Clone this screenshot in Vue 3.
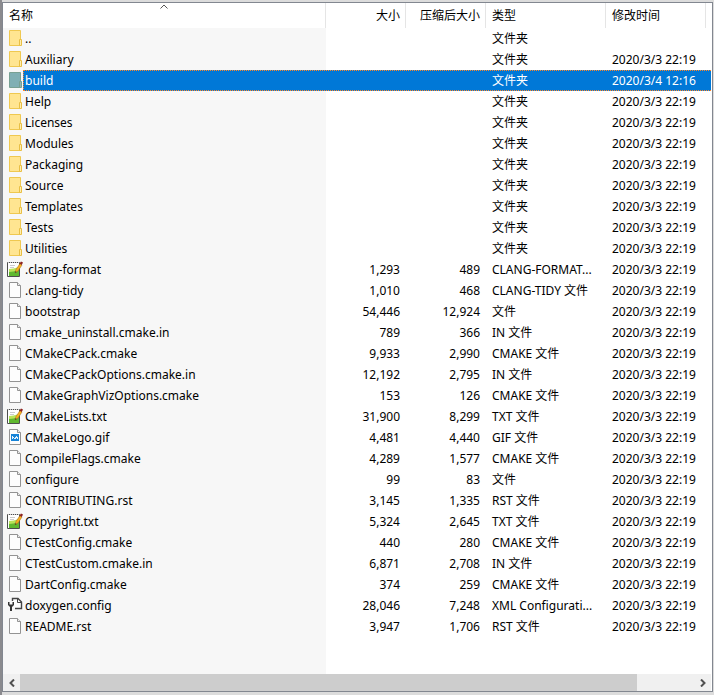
<template>
  <main class="window">
    <section class="panel">
      <div class="list">
        <table class="files">
          <colgroup>
            <col />
            <col class="col-size" />
            <col class="col-size" />
            <col class="col-type" />
            <col class="col-date" />
            <col class="col-rest" />
          </colgroup>
          <thead>
            <tr>
              <th v-for="col in columns" :key="col.key" :class="col.key">
                <button type="button" @click="sortKey = col.key">{{ col.label }}</button>
                <svg v-if="sortKey === col.key" class="sort" viewBox="0 0 8 5">
                  <path d="M0.5 4.5 L4 1 L7.5 4.5" fill="none" stroke="#555" />
                </svg>
              </th>
              <th></th>
            </tr>
          </thead>
          <tbody>
            <tr
              v-for="file in files"
              :key="file.name"
              :class="{ selected: file.name === selected }"
              @click="selected = file.name"
            >
              <td class="name">
                <div class="entry">
                  <svg v-if="file.icon === 'folder'" class="icon" viewBox="0 0 16 16">
                    <path class="folder-back" d="M2.5 0.5 H13.5 V15.5 H2.5 Z" />
                    <path class="folder-tab" d="M12.5 9.5 H14.5 V15.5 H12.5 Z" />
                  </svg>
                  <svg v-else-if="file.icon === 'note'" class="icon" viewBox="0 0 16 16">
                    <path d="M0.5 1.5 H12.5 V15.5 H0.5 Z" fill="#fff" stroke="#4d4d4d" />
                    <path d="M2 8 Q6 8 12 6 V15 H2 Z" fill="#b9e35a" />
                    <path d="M2 11 Q6 11 12 9 V15 H2 Z" fill="#5fb82f" />
                    <path d="M1 1.5 H12" stroke="#ccc" stroke-dasharray="1 1" />
                    <path d="M3 4.5 H8 M3 6.5 H7" stroke="#ccc" />
                    <path d="M8 12 L9 8.5 L13 2.5 L15 4 L11 10 Z" fill="#f9b01e" stroke="#9b6416" stroke-width="0.5" />
                    <path d="M12.5 2.5 L14 0.5 L16 1.5 L14.8 4 Z" fill="#8d2420" />
                    <path d="M8 12 L8.5 10.2 L9.8 11 Z" fill="#333" />
                  </svg>
                  <svg v-else-if="file.icon === 'config'" class="icon" viewBox="0 0 16 16">
                    <path d="M5.5 4 V1.5 H11 L14.5 5 V11.5 H8" fill="#fff" stroke="#444" stroke-width="1.4" />
                    <path d="M10.5 1.5 V5.5 H14.5" fill="none" stroke="#444" />
                    <path d="M1 5 V8 L3 10 V14 H5 V10 L7 8 V5 H5.5 V7.5 H2.5 V5 Z" fill="#333" />
                  </svg>
                  <svg v-else class="icon" viewBox="0 0 16 16">
                    <path d="M2.5 0.5 H10.5 L13.5 3.5 V15.5 H2.5 Z" fill="#fdfdfd" stroke="#939393" />
                    <path d="M10.5 0.5 V3.5 H13.5" fill="#eee" stroke="#939393" />
                    <template v-if="file.icon === 'image'">
                      <path d="M4 5 H12 V12 H4 Z" fill="#1683d8" />
                      <path d="M5 10 V7 H6 V8 H7 V9 H8 V8 H9 V7 H10 V8 H11 V10 H10 V9 H9 V10 H7 V9 H6 V10 Z" fill="#e4f2fc" />
                    </template>
                  </svg>
                  <span class="label">{{ file.name }}</span>
                </div>
              </td>
              <td class="size">{{ file.size }}</td>
              <td class="packed">{{ file.packed }}</td>
              <td class="type">{{ file.type }}</td>
              <td class="date">{{ file.date }}</td>
              <td></td>
            </tr>
          </tbody>
        </table>
      </div>
      <div class="scrollbar">
        <button type="button" aria-label="向左滚动">
          <svg viewBox="0 0 6 8"><path d="M5 0.5 L1.5 4 L5 7.5" /></svg>
        </button>
        <div class="track"><div class="thumb"></div></div>
        <button type="button" aria-label="向右滚动">
          <svg viewBox="0 0 6 8"><path d="M1 0.5 L4.5 4 L1 7.5" /></svg>
        </button>
      </div>
    </section>
  </main>
</template>

<script setup>
import { ref } from "vue"

const columns = [
  { key: "name", label: "名称" },
  { key: "size", label: "大小" },
  { key: "packed", label: "压缩后大小" },
  { key: "type", label: "类型" },
  { key: "date", label: "修改时间" }
]

const sortKey = ref("name")
const selected = ref("build")

const stamp = "2020/3/3 22:19"

function folder(name, date = stamp) {
  return { name, icon: "folder", type: "文件夹", date }
}

function item(name, size, packed, type, icon = "page") {
  return { name, size, packed, type, icon, date: stamp }
}

const files = [
  folder("..", ""),
  folder("Auxiliary"),
  folder("build", "2020/3/4 12:16"),
  folder("Help"),
  folder("Licenses"),
  folder("Modules"),
  folder("Packaging"),
  folder("Source"),
  folder("Templates"),
  folder("Tests"),
  folder("Utilities"),
  item(".clang-format", "1,293", "489", "CLANG-FORMAT...", "note"),
  item(".clang-tidy", "1,010", "468", "CLANG-TIDY 文件"),
  item("bootstrap", "54,446", "12,924", "文件"),
  item("cmake_uninstall.cmake.in", "789", "366", "IN 文件"),
  item("CMakeCPack.cmake", "9,933", "2,990", "CMAKE 文件"),
  item("CMakeCPackOptions.cmake.in", "12,192", "2,795", "IN 文件"),
  item("CMakeGraphVizOptions.cmake", "153", "126", "CMAKE 文件"),
  item("CMakeLists.txt", "31,900", "8,299", "TXT 文件", "note"),
  item("CMakeLogo.gif", "4,481", "4,440", "GIF 文件", "image"),
  item("CompileFlags.cmake", "4,289", "1,577", "CMAKE 文件"),
  item("configure", "99", "83", "文件"),
  item("CONTRIBUTING.rst", "3,145", "1,335", "RST 文件"),
  item("Copyright.txt", "5,324", "2,645", "TXT 文件", "note"),
  item("CTestConfig.cmake", "440", "280", "CMAKE 文件"),
  item("CTestCustom.cmake.in", "6,871", "2,708", "IN 文件"),
  item("DartConfig.cmake", "374", "259", "CMAKE 文件"),
  item("doxygen.config", "28,046", "7,248", "XML Configurati...", "config"),
  item("README.rst", "3,947", "1,706", "RST 文件")
]
</script>

<style>
body {
  margin: 0;
}
</style>

<style scoped>
.window {
  box-sizing: border-box;
  display: flex;
  min-height: 100vh;
  padding: 2px 1px 3px 2px;
  background: linear-gradient(to right, #8a8a8e 2px, #dcdcdc 2px);
  font-family: "Noto Sans", "Noto Sans CJK SC", sans-serif;
  font-size: 12px;
  color: #000;
}

.panel {
  flex: 1;
  display: flex;
  flex-direction: column;
  min-width: 0;
  padding-right: 1px;
  border: 1px solid #828790;
  background: #fff;
}

.list {
  flex: 1;
  background: linear-gradient(#f7f7f7, #f7f7f7) no-repeat 0 25px / calc(100% - 385px) 100%;
}

.files {
  width: 100%;
  table-layout: fixed;
  border-collapse: separate;
  border-spacing: 0;
}

.col-size {
  width: 80px;
}

.col-type {
  width: 120px;
}

.col-date {
  width: 100px;
}

.col-rest {
  width: 5px;
}

th {
  position: relative;
  height: 25px;
  padding: 0;
  border-right: 1px solid #e5e5e5;
  font-weight: normal;
}

th:last-child {
  border-right: none;
}

th button {
  display: block;
  width: 100%;
  height: 25px;
  padding: 0 6px;
  border: none;
  background: none;
  font: inherit;
  line-height: 25px;
  color: inherit;
  text-align: left;
}

th.size button,
th.packed button {
  padding: 0 5px;
  text-align: right;
}

.sort {
  position: absolute;
  top: 1px;
  left: 50%;
  width: 8px;
  height: 5px;
  margin-left: -4px;
}

td {
  height: 21px;
  padding: 0 6px;
  line-height: 21px;
  white-space: nowrap;
}

td:last-child {
  padding: 0;
}

td.name {
  padding: 0;
}

td.size,
td.packed {
  text-align: right;
}

.entry {
  display: flex;
  align-items: flex-start;
  padding-left: 4px;
}

.icon {
  flex: none;
  width: 16px;
  height: 16px;
  margin-top: 2px;
}

.label {
  flex: 1;
  height: 21px;
  padding-left: 2px;
}

.folder-back {
  fill: #ffe591;
  stroke: #efc850;
}

.folder-tab {
  fill: #ffeeb0;
  stroke: #e9bf45;
}

.selected {
  color: #fff;
}

.selected td:not(.name),
.selected .label {
  background:
    repeating-linear-gradient(to right, #ff8728 0 1px, #0078d7 1px 2px) 0 0 / 100% 1px no-repeat,
    repeating-linear-gradient(to right, #ff8728 0 1px, #0078d7 1px 2px) 0 100% / 100% 1px no-repeat,
    #0078d7;
}

.selected .label {
  padding-left: 1px;
  border-left: 1px dotted #ff8728;
}

.selected .folder-back {
  fill: #80afb4;
  stroke: #78a093;
}

.selected .folder-tab {
  fill: #8bb4b5;
  stroke: #78a093;
}

.scrollbar {
  display: flex;
  height: 17px;
  background: #f0f0f0;
}

.scrollbar button {
  flex: none;
  display: flex;
  align-items: center;
  justify-content: center;
  width: 17px;
  padding: 0;
  border: none;
  background: none;
}

.scrollbar svg {
  width: 6px;
  height: 8px;
}

.scrollbar path {
  fill: none;
  stroke: #505050;
  stroke-width: 2;
}

.track {
  flex: 1;
}

.thumb {
  width: 91.5%;
  height: 100%;
  background: #cdcdcd;
}
</style>
